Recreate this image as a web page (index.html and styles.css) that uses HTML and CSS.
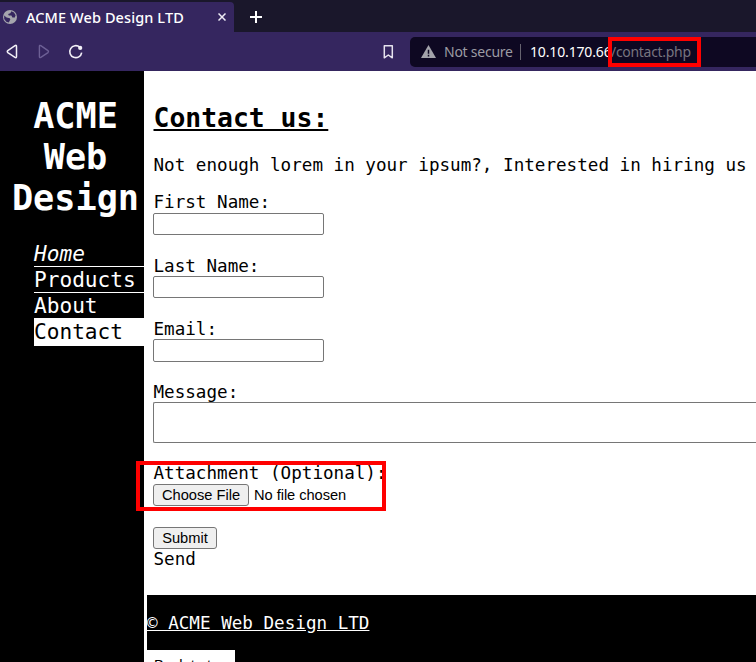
FILE: index.html
```html
<!DOCTYPE html>
<html lang="en">
<head>
<meta charset="utf-8">
<title>ACME Web Design LTD</title>
<link rel="stylesheet" href="styles.css">
</head>
<body>
<header class="browser">
  <div class="tabs">
    <div class="tab">
      <svg class="globe" width="14" height="14" viewBox="0 0 14 14"><circle cx="7" cy="7" r="7" fill="#a5a5ad"/><path d="M1.2 5.5 3.6 7.6 6.8 8.2 7.3 9.6 5.8 12.6 3.3 11.7 1.2 9ZM8.4 1.2 7.3 3.2 5.1 4 5.8 5.4 8.4 5.6 9.4 7.6 11.8 7.4 12.6 5.2 11 2.5Z" fill="#35265f"/></svg>
      <span class="tab-title">ACME Web Design LTD</span>
      <svg class="close" width="8" height="8" viewBox="0 0 8 8"><path d="M.5.5 7.5 7.5M7.5.5.5 7.5" stroke="#eeecf5" stroke-width="1.5"/></svg>
    </div>
    <svg class="plus" width="12" height="12" viewBox="0 0 12 12"><path d="M6 0V12M0 6H12" stroke="#fff" stroke-width="2"/></svg>
  </div>
  <div class="toolbar">
    <svg class="back" width="12" height="16" viewBox="0 0 12 16"><path d="M9 1.6Q10.5 .8 10.5 2.4V12.6Q10.5 14.2 9 13.4L1.8 8.6Q.8 7.6 1.8 6.6Z" fill="none" stroke="#f2f0f7" stroke-width="1.5" stroke-linejoin="round"/></svg>
    <svg class="forward" width="12" height="16" viewBox="0 0 12 16"><path d="M2.8 1.6Q1.4 .9 1.4 2.4V12.6Q1.4 14.1 2.8 13.4L10 8.6Q11 7.6 10 6.6Z" fill="none" stroke="#6d6095" stroke-width="1.4" stroke-linejoin="round"/></svg>
    <svg class="reload" width="16" height="16" viewBox="0 0 16 16"><path d="M11.8 3.2A6 6 0 1 0 13.7 8.6" fill="none" stroke="#f2f0f7" stroke-width="1.6"/><circle cx="12.2" cy="3.9" r="2.1" fill="#f2f0f7"/></svg>
    <svg class="bookmark" width="11" height="14" viewBox="0 0 11 14"><path d="M1.3 .8H9.3V12.8L5.3 10 1.3 12.8Z" fill="none" stroke="#e6e3ee" stroke-width="1.5" stroke-linejoin="round"/></svg>
    <div class="address">
      <svg class="warn" width="15" height="13" viewBox="0 0 15 13"><path d="M7.5 0 15 13H0Z" fill="#a3a3aa"/><path d="M7.5 4.8V8.8M7.5 9.8V11.4" stroke="#0e0822" stroke-width="1.5"/></svg>
      <span class="insecure">Not secure</span>
      <span class="divider"></span>
      <span class="host">10.10.170.66</span><span class="path">/contact.php</span>
      <div class="mark mark-path"></div>
    </div>
  </div>
</header>
<div class="page">
  <aside class="sidebar">
    <h1>ACME Web Design</h1>
    <nav>
      <a class="home">Home</a>
      <a>Products</a>
      <a class="last">About</a>
      <a class="current">Contact</a>
    </nav>
  </aside>
  <div class="content">
    <main>
      <h2>Contact us:</h2>
      <p>Not enough lorem in your ipsum?, Interested in hiring us</p>
      <form>
        <div class="field first"><label>First Name:</label><input type="text"></div>
        <div class="field"><label>Last Name:</label><input type="text"></div>
        <div class="field email"><label>Email:</label><input type="text"></div>
        <div class="field message"><label>Message:</label><textarea></textarea></div>
        <div class="field attachment">
          <label>Attachment (Optional):</label>
          <div class="file"><button type="button">Choose File</button><span>No file chosen</span></div>
          <div class="mark mark-file"></div>
        </div>
        <button class="submit" type="button">Submit</button>
        <div class="send">Send</div>
      </form>
    </main>
    <footer>
      <a class="copyright">© ACME Web Design LTD</a>
      <div class="top">Back to top</div>
    </footer>
  </div>
</div>
</body>
</html>
```
FILE: styles.css
```css
* { box-sizing: border-box; }
body { margin: 0; height: 662px; overflow: hidden; background: #fff; font: 17.6px/21px "DejaVu Sans Mono", monospace; color: #000; }
svg { display: block; flex: none; }

.browser { height: 71px; background: #35265f; font-family: "Noto Sans", sans-serif; }
.tabs { height: 32px; padding-top: 2px; background: #1a172b; display: flex; align-items: center; }
.tab { width: 234px; height: 30px; padding-left: 3px; background: #35265f; border-radius: 0 4px 0 0; display: flex; align-items: center; }
.tab-title { width: 158px; margin-left: 9px; font-size: 14.5px; font-weight: 500; letter-spacing: 0.1px; line-height: 20px; white-space: nowrap; color: #fff; }
.close { margin-left: 34px; }
.plus { margin-left: 16px; }
.toolbar { height: 39px; padding-left: 6px; display: flex; align-items: center; }
.forward { margin-left: 20px; }
.reload { margin-left: 18px; }
.bookmark { margin-left: 299px; }
.address { position: relative; width: 346px; height: 30px; margin-left: 16px; padding-left: 11px; background: #0e0822; border-radius: 5px 0 0 5px; display: flex; align-items: center; font-size: 14px; line-height: 20px; white-space: nowrap; }
.address span { flex: none; }
.insecure { width: 69px; margin-left: 8px; letter-spacing: -0.25px; color: #9c9ba3; }
.divider { width: 1px; height: 16px; margin: 0 9px 0 7px; background: #66636f; }
.host { width: 81px; letter-spacing: -0.15px; color: #fff; }
.path { letter-spacing: -0.3px; color: #77747f; }

.mark { position: absolute; border: 4px solid #f00; }
.mark-path { left: 198px; top: 0; width: 93px; height: 30px; }
.mark-file { left: -17px; top: -2px; width: 250px; height: 50px; }

.page { height: 591px; display: flex; }
.sidebar { flex: none; width: 144px; background: #000; color: #fff; padding: 24px 0 0 7px; }
h1 { margin: 0; font-size: 35.2px; line-height: 41px; text-align: center; }
nav { margin: 23px 0 0 27px; font-size: 21.12px; line-height: 25px; }
nav a { display: block; height: 26px; border-bottom: 1px solid #fff; }
nav .home { font-style: italic; }
nav .last { height: 25px; border: 0; }
nav .current { height: 28px; line-height: 27px; border: 0; background: #fff; color: #000; }

.content { flex: 1; min-width: 0; padding-left: 3px; }
main { height: 524px; padding: 31px 0 0 6px; }
h2 { margin: 0; padding-left: 0.5px; font-size: 26.4px; line-height: 31px; text-decoration: underline; }
p { margin: 22px 0 16px; padding-left: 0.5px; white-space: nowrap; }
label { display: block; height: 21px; padding-left: 0.5px; line-height: 23px; }
.first label { line-height: 21px; }
input { display: block; width: 171px; height: 22px; padding: 0; background: #fff; border: 1px solid #767676; border-radius: 2px; }
.field { height: 63px; }
.email input { height: 23px; }
textarea { display: block; width: 100%; height: 41px; background: #fff; border: 1px solid #767676; border-right: 0; border-radius: 2px 0 0 2px; resize: none; }
.message { height: 82px; }
.attachment { position: relative; height: 64px; }
.attachment label { line-height: 21px; }
button { width: 96px; height: 22px; padding: 0; background: #efefef; border: 1px solid #767676; border-radius: 3px; color: #000; font: 14.667px/18px "Liberation Sans", sans-serif; }
.file { display: flex; align-items: center; gap: 5px; font: 14.667px/22px "Liberation Sans", sans-serif; }
.file span { letter-spacing: -0.05px; }
.submit { display: block; width: 64px; }
.send { padding-left: 0.5px; }

footer { height: 67px; padding-top: 18px; background: #000; overflow: hidden; }
.copyright { display: block; color: #fff; text-decoration: underline; }
.top { width: 88px; height: 30px; margin-top: 16px; padding: 7px 0 0 7px; background: #fff; font: 14.667px/17px "Liberation Sans", sans-serif; }
```
